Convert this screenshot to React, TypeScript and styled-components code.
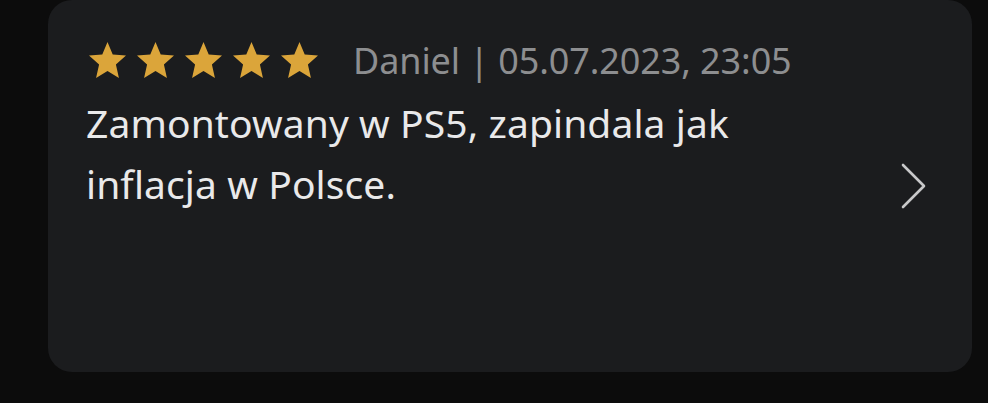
import React from "react";
import styled, { createGlobalStyle } from "styled-components";

const Global = createGlobalStyle`
  html, body { margin: 0; padding: 0; background: #0c0c0c; }
  body { width: 988px; height: 403px; overflow: hidden; font-family: "Noto Sans", "Open Sans", sans-serif; }
`;

const Page = styled.div`
  width: 988px;
  height: 403px;
  padding: 0 16px 31px 48px;
  box-sizing: border-box;
  display: flex;
`;

const Card = styled.div`
  flex: 1;
  background: #1b1c1e;
  border-radius: 24px;
  padding: 36px 40px 0 41px;
  display: flex;
  align-items: flex-start;
  position: relative;
`;

const Body = styled.div`
  flex: 1;
  display: flex;
  flex-direction: column;
`;

const MetaRow = styled.div`
  display: flex;
  align-items: center;
  gap: 35px;
  height: 48px;
`;

const Stars = styled.div`
  display: flex;
  gap: 11px;
`;

const Meta = styled.span`
  color: #8d8e90;
  font-size: 36px;
  letter-spacing: -0.1px;
`;

const Text = styled.p`
  margin: 8px 0 0 -3px;
  color: #e9e9ea;
  font-size: 39px;
  line-height: 61px;
  letter-spacing: 0.1px;
  width: 720px;
`;

const Chevron = styled.svg`
  position: absolute;
  right: 45px;
  top: 163px;
`;

const Star = () => (
  <svg width="37" height="36" viewBox="1 0.6 22 20.9" preserveAspectRatio="none">
    <path
      d="M12 0.6l3.1 7.3 7.9 0.6-6 5.2 1.8 7.8L12 17.4l-6.8 4.1 1.8-7.8-6-5.2 7.9-0.6z"
      fill="#dba53a"
    />
  </svg>
);

export default function App() {
  return (
    <>
      <Global />
      <Page>
        <Card>
          <Body>
            <MetaRow>
              <Stars>
                {[0, 1, 2, 3, 4].map((i) => (
                  <Star key={i} />
                ))}
              </Stars>
              <Meta>Daniel | 05.07.2023, 23:05</Meta>
            </MetaRow>
            <Text>Zamontowany w PS5, zapindala jak inflacja w Polsce.</Text>
          </Body>
          <Chevron width="26" height="46" viewBox="0 0 26 46">
            <path d="M2 2l21 21L2 44" fill="none" stroke="#c8c8c9" strokeWidth="2.6" strokeLinecap="round" strokeLinejoin="round" />
          </Chevron>
        </Card>
      </Page>
    </>
  );
}
